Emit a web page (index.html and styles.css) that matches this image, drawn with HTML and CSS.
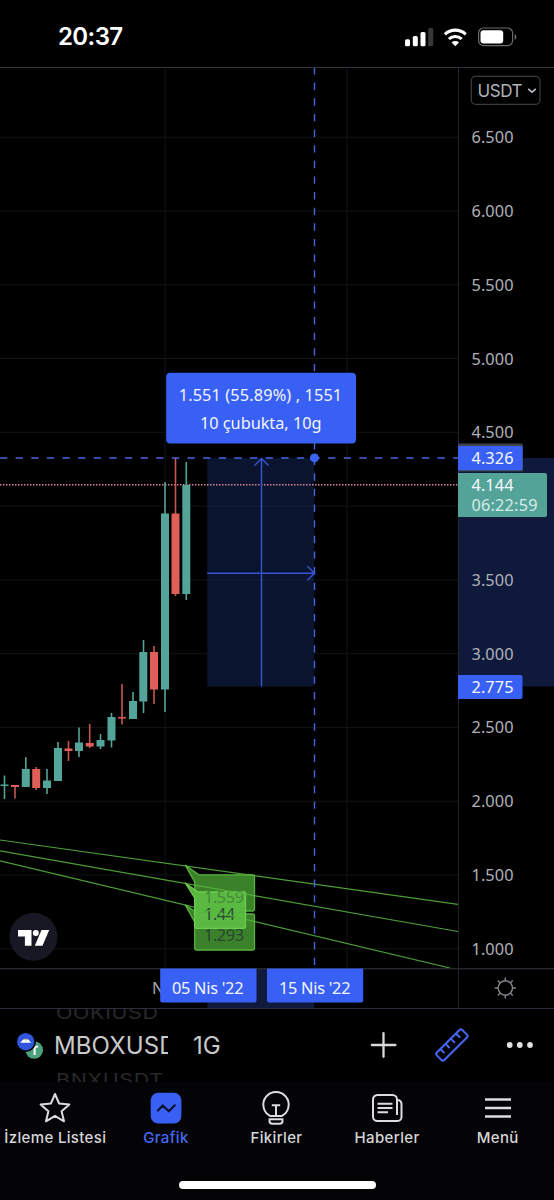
FILE: index.html
```html
<!DOCTYPE html>
<html lang="tr">
<head>
<meta charset="utf-8">
<title>MBOXUSDT</title>
<link rel="stylesheet" href="styles.css">
</head>
<body>
<div class="app">
  <header class="status">
    <span class="clock">20:37</span>
    <svg class="status-icons" viewBox="404 26 114 22" width="114" height="22">
      <g fill="#fff">
        <rect x="405" y="39.3" width="5" height="7" rx="1.5"/>
        <rect x="412.8" y="36" width="5" height="10.3" rx="1.5"/>
        <rect x="420.5" y="32" width="5" height="14.3" rx="1.5"/>
        <rect x="428.2" y="28" width="5" height="18.3" rx="1.5" fill="#38383a"/>
        <path d="M455.3 46.3l-3.7-3.8a5.4 5.4 0 0 1 7.4 0z"/>
      </g>
      <path d="M444.9 34.3a15 15 0 0 1 20.8 0M448.9 39a9.3 9.3 0 0 1 12.8 0" fill="none" stroke="#fff" stroke-width="3.1"/>
      <rect x="478.6" y="28" width="34" height="17.6" rx="5" fill="none" stroke="#6a6a6c" stroke-width="1.2"/>
      <rect x="480.5" y="30.2" width="22.7" height="13.2" rx="3" fill="#fff"/>
      <path d="M514.6 34v6c2.4-1 2.4-5 0-6z" fill="#6a6a6c"/>
    </svg>
  </header>

  <main class="chart">
    <svg class="pane" viewBox="0 68 458 900" width="458" height="900">
      <path class="grid" d="M0 137.2h458M0 211h458M0 284.8h458M0 358.5h458M0 432.3h458M0 506.1h458M0 579.9h458M0 653.7h458M0 727.4h458M0 801.2h458M0 875h458M0 948.8h458M165.2 68v900M347 68v900"/>
      <rect x="207.3" y="458" width="107" height="228.5" fill="#0b142e"/>
      <path d="M207.3 506.1h107M207.3 579.9h107" stroke="#161e36"/>
      <path d="M0 484.8h458" stroke="#d58398" stroke-width="1.5" stroke-dasharray="1.5 1.5"/>
      <g class="up">
        <path class="wick" d="M4.5 775.5V799M25.8 757v30M47 769v25M58 742v39M79 727.5V757M100.5 734v15M111.5 713v34.5M133 692v27M143.5 640v73M165 482v230M186.3 462v138"/>
        <path d="M.5 784.5h8v1.6h-8zM21.8 769h8v18h-8zM43 780.5h8v7.5h-8zM54 748h8v33h-8zM75 742.5h8v8.5h-8zM96.5 740h8v6.5h-8zM107.5 717h8v23.5h-8zM129 701h8v18h-8zM139.3 652h8v49.5h-8zM161 513.500h8v176h-8zM182.300 485h8v109h-8z"/>
      </g>
      <g class="down">
        <path class="wick" d="M15 785v13.5M36.2 767v23M68.5 741v20M89.7 724v24M122 684v40.5M154 646v58M175.5 458v138"/>
        <path d="M11 785h8v2h-8zM32.2 769h8v19h-8zM64.5 748.5h8v2.5h-8zM85.7 743h8v3.5h-8zM118 717h8v1.6h-8zM150 652h8v37.5h-8zM171.5 513.5h8v80.5h-8z"/>
      </g>
      <g class="callout" stroke-linejoin="round">
        <path d="M185.300 865.300L199 874.800H253q1.500 0 1.500 1.500V909.500q0 1.500-1.500 1.500H196.200q-1.500 0-1.500-1.500V882z"/>
        <path d="M185.300 905L199 914H253q1.500 0 1.500 1.500V948.500q0 1.500-1.500 1.500H196.200q-1.500 0-1.500-1.500V922z"/>
        <path class="front" d="M185.300 883L198 892H244q1.500 0 1.500 1.500V926.800q0 1.500-1.500 1.500H196.200q-1.500 0-1.500-1.500V898z"/>
      </g>
      <g class="num">
        <text x="204" y="903" textLength="40" fill="#478a3a">1.559</text>
        <text x="204" y="920" textLength="31" fill="#2b4a34">1.44</text>
        <text x="204" y="941" textLength="40" fill="#284833">1.293</text>
      </g>
      <path d="M0 840L458 904.300M0 850.900L458 931.500M0 860.800L450 968" stroke="#58b83f" stroke-width="1.200" stroke-opacity=".85" fill="none"/>
      <path class="dash" d="M0 458H458M314.500 67.100V968"/>
      <path d="M261.500 686.500V459M254.500 465.500l7-7 7 7M207.300 573.200H314M307.500 566.200l7 7-7 7" fill="none" stroke="#3755d8" stroke-width="1.400"/>
      <circle cx="314.400" cy="457.900" r="4.500" fill="#3a62f6"/>
      <rect x="166.200" y="372.700" width="189.800" height="70.800" rx="4" fill="#3860f4"/>
      <g class="num" fill="#f4f6ff">
        <text x="178.700" y="400.700" textLength="163.500">1.551 (55.89%) , 1551</text>
        <text x="200" y="429.300" textLength="121.500">10 çubukta, 10g</text>
      </g>
      <circle cx="33.400" cy="936.800" r="24" fill="#171823"/>
      <path d="M18 930h13.500v15.700h-6.600v-9.200H18zM41.500 930h7.700l-6.700 15.700h-7.700z" fill="#fff"/>
      <circle cx="35.800" cy="933" r="3" fill="#fff"/>
    </svg>

    <svg class="axis" viewBox="458 68 96 900" width="96" height="900">
      <rect x="458" y="458" width="96" height="228.500" fill="#0e193b"/>
      <path d="M458.200 68v900" stroke="#25272c" stroke-width="1.400"/>
      <rect x="471.300" y="76.300" width="68.700" height="28" rx="4.500" fill="none" stroke="#3a3c43" stroke-width="1.200"/>
      <text class="unit" x="477.500" y="96.800" textLength="45">USDT</text>
      <path d="M528.200 88.800l3.800 3.400 3.800-3.400" fill="none" stroke="#b9bac0" stroke-width="1.600"/>
      <g class="num" fill="#b0b2b9">
        <text x="471.500" y="143.200" textLength="42">6.500</text>
        <text x="471.500" y="217" textLength="42">6.000</text>
        <text x="471.500" y="290.800" textLength="42">5.500</text>
        <text x="471.500" y="364.500" textLength="42">5.000</text>
        <text x="471.500" y="438.300" textLength="42">4.500</text>
        <text x="471.500" y="585.900" textLength="42">3.500</text>
        <text x="471.500" y="659.700" textLength="42">3.000</text>
        <text x="471.500" y="733.400" textLength="42">2.500</text>
        <text x="471.500" y="807.200" textLength="42">2.000</text>
        <text x="471.500" y="881" textLength="42">1.500</text>
        <text x="471.500" y="954.800" textLength="42">1.000</text>
      </g>
      <path d="M458 443.500h63q2 0 2 2v26h-65z" fill="#40444d"/>
      <path d="M457.500 446h63q2 0 2 2v20.300q0 2-2 2h-63zM457.500 675h63q2 0 2 2v20q0 2-2 2h-63z" fill="#3860f4"/>
      <path d="M457.500 473h87.500q2 0 2 2v40q0 2-2 2h-87.500z" fill="#53a398"/>
      <g class="num" fill="#f6f8ff">
        <text x="471.500" y="463.800" textLength="42">4.326</text>
        <text x="471.500" y="491" textLength="42">4.144</text>
        <text x="471.500" y="510.800" textLength="66" fill="#d6ebe7">06:22:59</text>
        <text x="471.500" y="692.800" textLength="42">2.775</text>
      </g>
    </svg>

    <svg class="time" viewBox="0 968 458 41" width="458" height="41">
      <rect x="207.300" y="968" width="107" height="40" fill="#0f1a3c"/>
      <path d="M0 968.700h458" stroke="#25272c" stroke-width="1.400"/>
      <text class="num" x="152" y="994" fill="#a5a7ae">N</text>
      <path d="M160.200 968.500h96.300v32q0 2-2 2h-92.300q-2 0-2-2zM267 968.500h96.200v32q0 2-2 2h-92.200q-2 0-2-2z" fill="#3860f4"/>
      <g class="num" fill="#f4f6ff">
        <text x="172" y="993.800" textLength="71.500">05 Nis '22</text>
        <text x="279" y="993.800" textLength="71.500">15 Nis '22</text>
      </g>
    </svg>
    <svg class="corner" viewBox="458 968 96 41" width="96" height="41">
      <path d="M458.200 968v40M458 968.700h96" stroke="#25272c" stroke-width="1.400"/>
      <g fill="none" stroke="#85878d" stroke-width="1.400">
        <circle cx="505.300" cy="988" r="7.200"/>
        <path d="M505.300 980.800v-3.300M505.300 995.200v3.300M498.100 988h-3.300M512.500 988h3.300M500.200 982.900l-2.300-2.300M510.400 982.900l2.300-2.300M500.200 993.100l-2.300 2.300M510.400 993.100l2.300 2.300"/>
      </g>
    </svg>
  </main>

  <section class="toolbar">
    <svg class="coins" viewBox="16 1031 28 28" width="28" height="28">
      <circle cx="34.200" cy="1049" r="8.800" fill="#4ea17f"/>
      <path d="M30.500 1045.800h7.400M34.600 1046v8" stroke="#fff" stroke-width="2"/>
      <circle cx="25.700" cy="1040.700" r="10.300" fill="#000"/>
      <circle cx="25.700" cy="1040.700" r="8.700" fill="#2f56dc"/>
      <path d="M20 1042.300q2.600-4.600 5.800-4.400 3.200-.2 5.500 4.400-2-1.500-3.600-.2-2-1.300-4 0-1.700-1.300-3.700.2z" fill="#fff"/>
      <circle cx="25.800" cy="1038.500" r="1.100" fill="#c9a94b"/>
    </svg>
    <div class="wheel">
      <span class="ghost prev">OOKIUSD</span>
      <span class="symbol">MBOXUSDT</span>
      <span class="ghost next">BNXUSDT</span>
    </div>
    <span class="interval">1G</span>
    <svg class="tools" viewBox="368 1009 186 73" width="186" height="73">
      <path d="M371.800 1045h23.600M383.500 1033.200v23.600" stroke="#d9d9db" stroke-width="2.300" stroke-linecap="round"/>
      <g transform="translate(451.900 1045) rotate(-45)" fill="none" stroke="#4468f5" stroke-width="2" stroke-linejoin="round" stroke-linecap="round">
        <rect x="-18" y="-5.300" width="36" height="10.600" rx="2"/>
        <path d="M-11-5v4.800M-3.700-5v4.800M3.700-5v4.800M11-5v4.800"/>
      </g>
      <g fill="#e0e0e2"><circle cx="509.700" cy="1045" r="2.900"/><circle cx="519.800" cy="1045" r="2.900"/><circle cx="530" cy="1045" r="2.900"/></g>
    </svg>
  </section>

  <nav class="tabs">
    <a class="tab"><svg viewBox="0 0 36 36" width="36" height="36"><path d="M18 4l4.100 9.500 10.300.9-7.800 6.800 2.400 10.100-9-5.400-9 5.400 2.400-10.100-7.800-6.800 10.300-.9z" fill="none" stroke="#dcdcde" stroke-width="2" stroke-linejoin="round"/></svg><span>İzleme Listesi</span></a>
    <a class="tab active"><svg viewBox="0 0 36 36" width="36" height="36"><rect x="2.700" y="2.700" width="30.700" height="30.700" rx="7.500" fill="#3860f4"/><path d="M10 20.500l4.800-5 6 5.800 6-6" fill="none" stroke="#0a1030" stroke-width="2.200" stroke-linecap="round" stroke-linejoin="round"/></svg><span>Grafik</span></a>
    <a class="tab"><svg viewBox="0 0 36 36" width="36" height="36"><g fill="none" stroke="#dcdcde" stroke-width="2" stroke-linejoin="round"><path d="M12 25.900a12.700 12.700 0 1 1 12 0zM11.500 29.300h13v1.700q0 2.800-2.800 2.800h-7.400q-2.800 0-2.800-2.800zM13.800 15.300h8.400M18 15.300v10.500"/></g></svg><span>Fikirler</span></a>
    <a class="tab"><svg viewBox="0 0 36 36" width="36" height="36"><g fill="none" stroke="#dcdcde" stroke-width="2"><path d="M28 25V9.500a4.500 4.500 0 0 0-4.500-4.500h-15A4.500 4.500 0 0 0 4 9.500v17A4.500 4.500 0 0 0 8.500 31H28.500a4 4 0 0 0 4-4V13.500a3.800 3.800 0 0 0-4-3.500M8.500 13.800h15M8.500 18h15M8.500 22.300h10.500"/></g></svg><span>Haberler</span></a>
    <a class="tab"><svg viewBox="0 0 36 36" width="36" height="36"><path d="M5 9.500h26M5 18h26M5 26.500h26" stroke="#dcdcde" stroke-width="2.600"/></svg><span>Menü</span></a>
  </nav>
  <div class="home"><i></i></div>
</div>
</body>
</html>
```
FILE: styles.css
```css
* { box-sizing: border-box; }
body { margin: 0; background: #000; font-family: Inter, "Liberation Sans", sans-serif; }
svg { display: block; }
.app { width: 554px; height: 1200px; overflow: hidden; display: flex; flex-direction: column; background: #000; }

.status { height: 68px; display: flex; justify-content: space-between; align-items: flex-start; padding: 26px 36px 0 58px; border-bottom: 1px solid #33353e; }
.clock { color: #fff; font-size: 24px; font-weight: 600; line-height: 22px; letter-spacing: -.6px; }

.chart { display: grid; grid-template-columns: 458px 96px; grid-template-rows: 900px 41px; border-bottom: 1px solid #2b2d3a; height: 941px; }
.grid { stroke: #131416; fill: none; }
.num { font-family: "Noto Sans", "Open Sans", sans-serif; font-size: 16.3px; }
.unit { font-size: 17px; fill: #b0b2b9; }
.up { fill: #53a499; }
.down { fill: #df5f58; }
.wick { fill: none; stroke-width: 1.6; }
.up .wick { stroke: #53a499; }
.down .wick { stroke: #c9554f; }
.dash { fill: none; stroke: #4a63e0; stroke-width: 1.4; stroke-dasharray: 7.3 8.325; }
.callout path { fill: #3b8129; stroke: #57b43f; stroke-width: 1.3; }
.callout .front { fill: #5bbb42; fill-opacity: .96; stroke: #6ace50; }

.toolbar { height: 73px; display: flex; align-items: center; }
.coins { margin-left: 16px; }
.wheel { margin-left: 10px; width: 114px; height: 73px; overflow: hidden; display: flex; flex-direction: column; justify-content: space-between; white-space: nowrap; }
.symbol { color: #c9c9cb; font-size: 24px; line-height: 28px; letter-spacing: .1px; }
.ghost { color: #29292b; font-size: 21.5px; line-height: 16px; height: 10px; padding-left: 2px; display: flex; letter-spacing: .6px; }
.prev { align-items: flex-end; transform: translateY(2px) scaleY(.8); transform-origin: top; }
.next { transform: translateY(-1px) scaleY(.8); transform-origin: bottom; }
.interval { color: #c9c9cb; font-size: 24px; line-height: 28px; width: 32px; margin-left: 25px; }
.tools { flex: none; margin-left: auto; }

.tabs { height: 80px; width: 553px; display: flex; padding-top: 8px; }
.tabs, .home { background: #040406; }
.tab { flex: 1 1 0; display: flex; flex-direction: column; align-items: center; color: #d6d6d8; font-size: 15px; font-weight: 500; line-height: 20px; white-space: nowrap; letter-spacing: .35px; }
.tab span { margin-top: 2px; }
.tab.active { color: #4468f5; }
.home { flex: 1; display: flex; justify-content: center; padding-top: 19px; }
.home i { width: 197px; height: 7.5px; border-radius: 4px; background: #fff; }
```
